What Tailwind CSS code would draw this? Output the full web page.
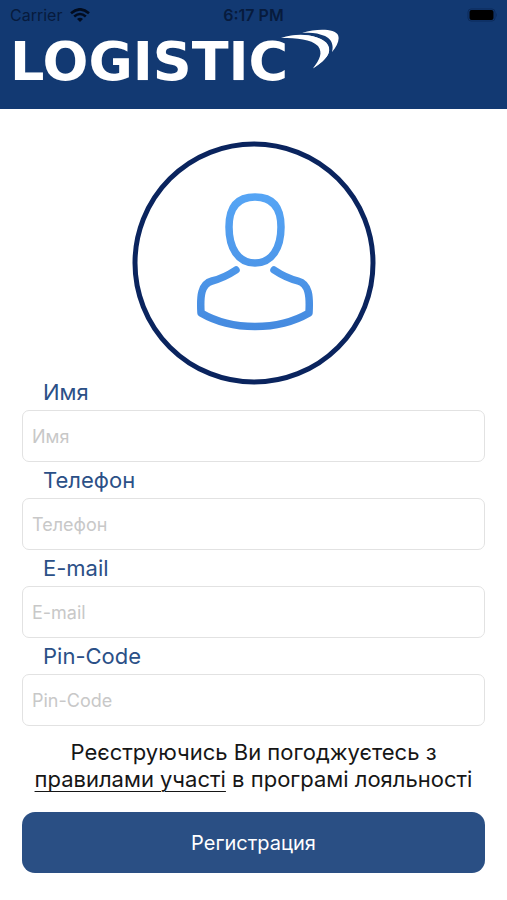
<!DOCTYPE html>
<html lang="uk">
<head>
<meta charset="utf-8">
<meta name="viewport" content="width=device-width, initial-scale=1">
<title>Logistic</title>
<script src="https://cdn.jsdelivr.net/npm/@tailwindcss/browser@4"></script>
</head>
<body class="min-h-screen bg-white font-['Inter','Liberation_Sans',sans-serif]">
<header class="bg-[#123972] pb-5">
  <div class="grid grid-cols-3 items-center h-[30px] px-[10px] text-[16px] leading-[20px] text-[#071b3d]">
    <div class="flex items-center gap-2">
      <span>Carrier</span>
      <svg class="w-5 h-[14px]" viewBox="0 0 20 14" fill="none" stroke="#020c1f" stroke-width="2.6" aria-hidden="true"><path d="M1 5.2Q10-2.6 19 5.2M4.2 8.4Q10 3.6 15.8 8.4"/><path d="M7 11Q10 8.6 13 11L10 14Z" fill="#020c1f" stroke="none"/></svg>
    </div>
    <span class="text-center font-semibold">6:17 PM</span>
    <svg class="justify-self-end w-[30px] h-[14px]" viewBox="0 0 30 14" aria-hidden="true"><rect x="1" y="1" width="27" height="12" rx="3" fill="none" stroke="#0b2a5b"/><rect x="2.500" y="2" width="24" height="10" rx="2" fill="#000"/><path d="M29 5v4q1.500-2 0-4" fill="#0b2a5b"/></svg>
  </div>
  <div class="relative h-[59px] px-[10px] flex items-end">
    <span class="font-['DejaVu_Sans',sans-serif] font-bold text-[54px] leading-[54px] text-white">LOGISTIC</span>
    <svg class="absolute left-[280px] top-[-1px] w-[60px] h-[40px]" viewBox="0 0 60 40" fill="#fff" aria-hidden="true"><path d="M1 9C20 4 37 9 43 18C47 25 43 30 33 39C46 31 52 23 48 16C42 6 20 4 1 9Z"/><path d="M1 9C20 3 37 6 46 14C53 22 48 30 33 39.500C40 30 43 24 38 17C31 10 17 9 1 9Z"/><path d="M22 4C38-1 55 0 58 6C60 11 57 17 52 23C54 15 51 10 45 7C38 4 31 3 22 4Z"/></svg>
  </div>
</header>
<main class="px-[22px] pb-[27px]">
  <svg class="block mx-auto mt-[32px] -mb-[11px] w-[244px] h-[244px]" viewBox="0 0 244 244" fill="none" role="img" aria-label="Avatar">
    <defs><linearGradient id="skin" gradientUnits="userSpaceOnUse" x1="0" y1="52" x2="0" y2="190"><stop stop-color="#56a5f5"/><stop offset="1" stop-color="#458adf"/></linearGradient></defs>
    <circle cx="122" cy="122" r="119" stroke="#0a245e" stroke-width="5"/>
    <g stroke="url(#skin)" stroke-width="7.500" stroke-linecap="round" stroke-linejoin="round"><path d="M123 56C104 56 97 68 97 86C97 107 106 122 123 122C140 122 149 107 149 86C149 68 142 56 123 56Z"/><path d="M104 129Q92 137 80 140C69 143 68 155 69 172C100 190 146 190 177 172C178 155 177 143 166 140Q154 137 142 129"/></g>
  </svg>
  <form>
    <label for="name" class="block pl-[21px] text-[22px] leading-[36px] text-[#2b5087]">Имя</label>
    <input id="name" type="text" placeholder="Имя" class="block w-full h-[52px] rounded-[7px] border border-[#e2e2e2] px-[9px] text-[18px] placeholder:text-[#c8c8c8]">
    <label for="phone" class="block pl-[21px] text-[22px] leading-[36px] text-[#2b5087]">Телефон</label>
    <input id="phone" type="tel" placeholder="Телефон" class="block w-full h-[52px] rounded-[7px] border border-[#e2e2e2] px-[9px] text-[18px] placeholder:text-[#c8c8c8]">
    <label for="email" class="block pl-[21px] text-[22px] leading-[36px] text-[#2b5087]">E-mail</label>
    <input id="email" type="email" placeholder="E-mail" class="block w-full h-[52px] rounded-[7px] border border-[#e2e2e2] px-[9px] text-[18px] placeholder:text-[#c8c8c8]">
    <label for="pin" class="block pl-[21px] text-[22px] leading-[36px] text-[#2b5087]">Pin-Code</label>
    <input id="pin" type="text" placeholder="Pin-Code" class="block w-full h-[52px] rounded-[7px] border border-[#e2e2e2] px-[9px] text-[18px] placeholder:text-[#c8c8c8]">
    <p class="mt-[13px] text-center text-[22px] leading-[27px] text-[#161616]">Реєструючись Ви погоджуєтесь з<br><a href="#" class="underline decoration-1 underline-offset-4">правилами участі</a> в програмі лояльності</p>
    <button type="submit" class="block mt-[19px] w-full h-[61px] rounded-[13px] bg-[#2a4f84] text-[20px] text-white">Регистрация</button>
  </form>
</main>
</body>
</html>
